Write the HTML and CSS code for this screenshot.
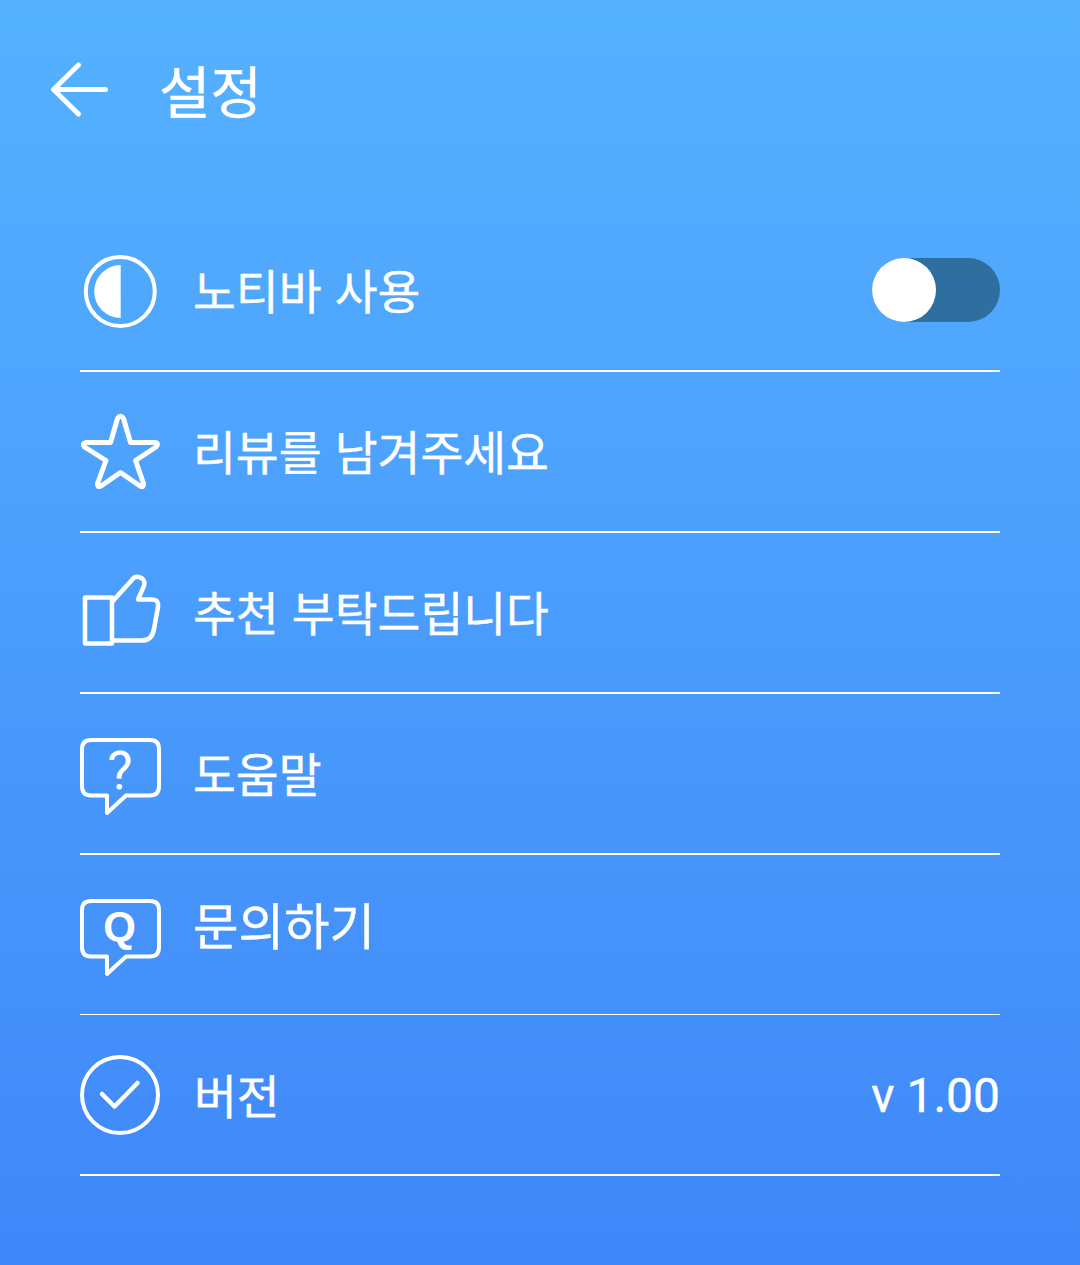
FILE: index.html
```html
<!DOCTYPE html>
<html lang="ko">
<head>
    <meta charset="UTF-8">
    <title>설정</title>
    <link rel="stylesheet" href="styles.css">
</head>
<body>
    <div class="container">
        <div class="header">
            <svg class="back-icon" width="60" height="60" viewBox="0 0 60 60">
                <path d="M56.500 29.500H4.500M29.500 5L4.500 29.500L29.500 54" fill="none" stroke="#fff" stroke-width="5" stroke-linecap="round" stroke-linejoin="round"/>
            </svg>
            <h2>설정</h2>
        </div>

        <div class="settings-list">
            <div class="setting-item">
                <svg class="item-icon" width="80" height="80" viewBox="0 0 80 80">
                    <circle cx="40.300" cy="40.500" r="34.500" fill="none" stroke="#fff" stroke-width="4"/>
                    <path d="M40.700 14a26.500 26.500 0 0 0 0 53z" fill="#fff"/>
                </svg>
                <span class="item-label">노티바 사용</span>
                <div class="toggle"><div class="toggle-knob"></div></div>
            </div>
            <div class="setting-item">
                <svg class="item-icon" width="80" height="80" viewBox="0 0 80 80">
                    <path d="M37.500 6.500Q40.500 2 43.500 6.500L50.500 30.500H75Q79.500 31.500 76 35L55.500 48.500L63.500 71.500Q64 76 60 74L40.500 60.500L21 74Q17 76 17.500 71.500L26 48.500L4.500 35Q1.500 31.500 6 30.500H30.500Z" fill="none" stroke="#fff" stroke-width="5" stroke-linejoin="round"/>
                </svg>
                <span class="item-label">리뷰를 남겨주세요</span>
            </div>
            <div class="setting-item">
                <svg class="item-icon" width="80" height="80" viewBox="0 0 80 80">
                    <path d="M5 24.500H32V70.500H5Z" fill="none" stroke="#fff" stroke-width="4.500" stroke-linejoin="round"/>
                    <path d="M32 29L51 8Q54 3 59 4Q66 6 64 13L58 26.500H72Q79 26.500 78 34L74 56Q72 67.500 62 67.500H32" fill="none" stroke="#fff" stroke-width="4.500" stroke-linejoin="round"/>
                </svg>
                <span class="item-label">추천 부탁드립니다</span>
            </div>
            <div class="setting-item">
                <svg class="item-icon" width="80" height="80" viewBox="0 0 80 80">
                    <path d="M11 6H70Q79 6 79 15V52Q79 61.500 70 61.500H46L27 79V61.500H11Q2 61.500 2 52V15Q2 6 11 6Z" fill="none" stroke="#fff" stroke-width="4" stroke-linejoin="round"/>
                    <text class="icon-help" x="40" y="54.500" text-anchor="middle">?</text>
                </svg>
                <span class="item-label">도움말</span>
            </div>
            <div class="setting-item setting-item-thin">
                <svg class="item-icon" width="80" height="80" viewBox="0 0 80 80">
                    <path d="M11 6H70Q79 6 79 15V52Q79 61.500 70 61.500H46L27 79V61.500H11Q2 61.500 2 52V15Q2 6 11 6Z" fill="none" stroke="#fff" stroke-width="4" stroke-linejoin="round"/>
                    <text class="icon-q" x="39.500" y="46" text-anchor="middle">Q</text>
                </svg>
                <span class="item-label item-label-large">문의하기</span>
            </div>
            <div class="setting-item">
                <svg class="item-icon" width="80" height="80" viewBox="0 0 80 80">
                    <circle cx="40" cy="40" r="38" fill="none" stroke="#fff" stroke-width="4"/>
                    <path d="M22 39L34.500 51.500L57.500 28" fill="none" stroke="#fff" stroke-width="4.500" stroke-linecap="round" stroke-linejoin="round"/>
                </svg>
                <span class="item-label item-label-version">버전</span>
                <span class="version">v 1.00</span>
            </div>
        </div>
    </div>
</body>
</html>
```

FILE: styles.css
```css
html, body {
    margin: 0;
    padding: 0;
}
body {
    width: 1080px;
    height: 1265px;
    overflow: hidden;
    font-family: 'Noto Sans CJK KR', 'Noto Sans', sans-serif;
    background: linear-gradient(to bottom, #55b2ff, #3f87f9);
    color: white;
    -webkit-text-stroke: 0.4px white;
}
.container {
    display: flex;
    flex-direction: column;
    height: 100%;
}
.header {
    display: flex;
    align-items: center;
    height: 180px;
    padding-left: 49px;
    gap: 50px;
}
h2 {
    margin: 0 0 3px;
    font-size: 56px;
    font-weight: 400;
}
.settings-list {
    margin: 31px 80px 0;
}
.setting-item {
    display: flex;
    align-items: center;
    box-sizing: border-box;
    height: 161px;
    border-bottom: 2px solid white;
}
.setting-item-thin {
    height: 160px;
    border-bottom-width: 1px;
}
.item-icon {
    flex-shrink: 0;
    overflow: visible;
}
.item-label {
    margin: 0 0 5px 33px;
    font-size: 46.600px;
}
.item-label-large {
    margin-bottom: 22px;
    font-size: 49.500px;
}
.item-label-version {
    margin: 0 0 3px 34px;
}
.toggle {
    margin: 0 0 2px auto;
    width: 128px;
    height: 64px;
    border-radius: 32px;
    background: #2e6f9f;
}
.toggle-knob {
    width: 64px;
    height: 64px;
    border-radius: 50%;
    background: white;
}
.version {
    margin: 2px 0 0 auto;
    font-family: Roboto, sans-serif;
    font-size: 48px;
}
.icon-help {
    font-family: Roboto, sans-serif;
    font-size: 54px;
    fill: white;
}
.icon-q {
    font-family: 'Liberation Sans', sans-serif;
    font-size: 42px;
    font-weight: bold;
    fill: white;
}
```
